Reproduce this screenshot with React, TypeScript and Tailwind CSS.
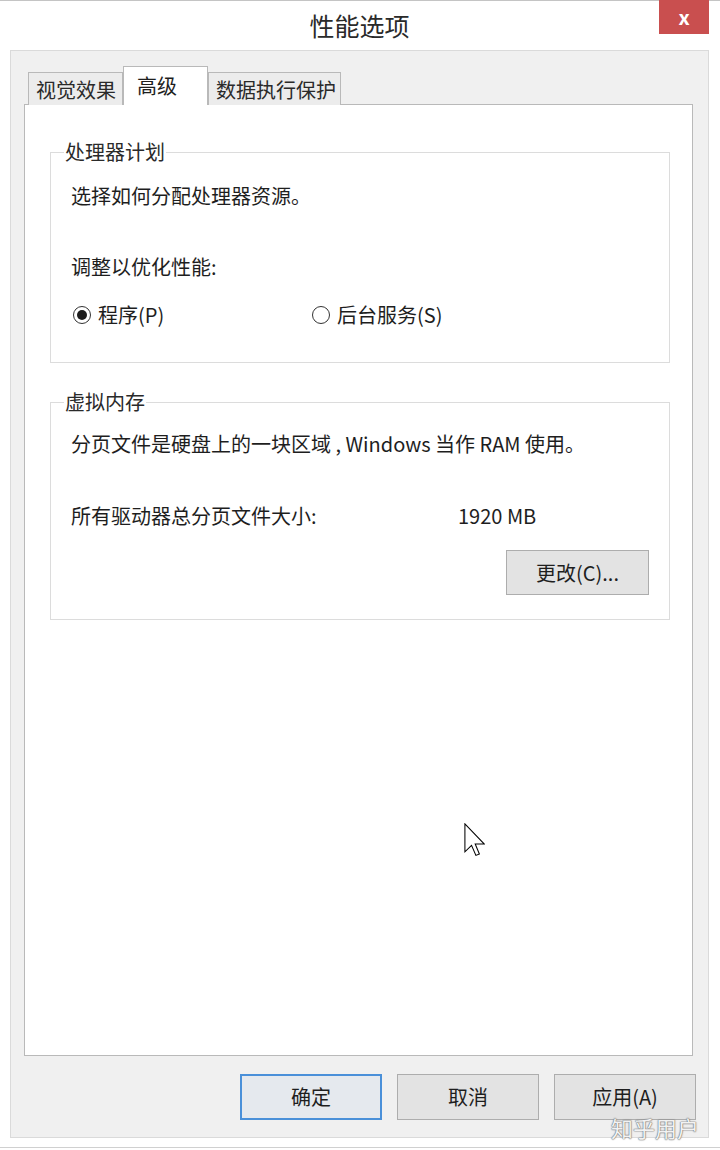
import React, {useState} from 'react';

const font = {fontFamily: '"Noto Sans CJK SC", "Noto Sans", sans-serif'};

const Radio: React.FC<{checked: boolean; label: string; onClick: () => void; className?: string}> = ({checked, label, onClick, className}) => (
    <div className={`flex items-center cursor-default ${className ?? ''}`} onClick={onClick}>
        <span className="w-[18px] h-[18px] rounded-full border border-[#333] bg-white flex items-center justify-center">
            {checked && <span className="w-[10px] h-[10px] rounded-full bg-[#1c1c1c]" />}
        </span>
        <span className="ml-[7px]">{label}</span>
    </div>
);

const App: React.FC = () => {
    const [mode, setMode] = useState<'program' | 'service'>('program');
    const tabs = [
        {label: '视觉效果', w: 'w-[95px]'},
        {label: '高级', w: 'w-[85px]'},
        {label: '数据执行保护', w: 'w-[133px]'},
    ];
    const active = 1;

    return (
        <div className="relative w-[720px] h-[1150px] bg-white text-[#1e1e1e] text-[20px] leading-[24px] overflow-hidden" style={font}>
            {/* Title bar */}
            <div className="h-[50px] border-t border-[#c4c4c4] flex items-center justify-center">
                <span className="text-[25px] text-[#2a2a2a] mt-[-2px] ml-[-1px]">性能选项</span>
            </div>
            <div className="absolute top-0 left-[659px] w-[50px] h-[34px] bg-[#c94f4f] flex items-center justify-center text-white text-[20px] font-bold">
                x
            </div>

            {/* Dialog body */}
            <div className="ml-[10px] w-[699px] h-[1088px] bg-[#f0f0f0] border border-[#dadada] pl-[13px] pr-[15px] pt-[15px] flex flex-col">
                {/* Tabs */}
                <div className="flex items-end h-[39px] ml-[4px] relative z-10">
                    {tabs.map((t, i) =>
                        i === active ? (
                            <div key={t.label} className={`${t.w} h-[39px] bg-white border border-b-0 border-[#b9b9b9] pl-[13px] pt-[7px]`}>
                                {t.label}
                            </div>
                        ) : (
                            <div key={t.label} className={`${t.w} h-[33px] bg-[#ececec] border border-b-0 border-[#b9b9b9] pl-[7px] pt-[5px] text-[#2a2a2a]`}>
                                {t.label}
                            </div>
                        )
                    )}
                </div>

                {/* Panel */}
                <div className="flex-1 bg-white border border-[#b9b9b9] mt-[-1px] pl-[25px] pr-[22px] pt-[35px]">
                    <fieldset className="border border-[#dcdcdc] px-[20px] pb-[35px]">
                        <legend className="ml-[-7px] px-[1px] text-[#2a2a2a]">处理器计划</legend>
                        <div className="mt-[20px]">选择如何分配处理器资源。</div>
                        <div className="mt-[47px]">调整以优化性能:</div>
                        <div className="mt-[24px] flex items-center">
                            <Radio className="w-[239px] ml-[2px]" checked={mode === 'program'} label="程序(P)" onClick={() => setMode('program')} />
                            <Radio checked={mode === 'service'} label="后台服务(S)" onClick={() => setMode('service')} />
                        </div>
                    </fieldset>

                    <fieldset className="mt-[27px] border border-[#dcdcdc] px-[20px] pb-[24px]">
                        <legend className="ml-[-7px] px-[1px] text-[#2a2a2a]">虚拟内存</legend>
                        <div className="mt-[18px]">分页文件是硬盘上的一块区域 , Windows 当作 RAM 使用。</div>
                        <div className="mt-[48px] flex">
                            <span className="w-[387px]">所有驱动器总分页文件大小:</span>
                            <span>1920 MB</span>
                        </div>
                        <div className="mt-[22px] flex justify-end">
                            <button className="w-[143px] h-[45px] bg-[#e3e3e3] border border-[#adadad] text-[#1e1e1e]">
                                更改(C)...
                            </button>
                        </div>
                    </fieldset>
                </div>

                {/* Bottom buttons */}
                <div className="flex justify-end gap-[15px] mt-[18px] mb-[17px] mr-[-3px]">
                    <button className="w-[142px] h-[46px] bg-[#e5e9ee] border-2 border-[#4a90d9] text-[#1e1e1e]">确定</button>
                    <button className="w-[142px] h-[46px] bg-[#e3e3e3] border border-[#adadad] text-[#1e1e1e]">取消</button>
                    <button className="w-[142px] h-[46px] bg-[#e3e3e3] border border-[#adadad] text-[#1e1e1e]">应用(A)</button>
                </div>
            </div>
            <div className="mt-[9px] border-t border-[#d0d0d0]" />

            {/* Watermark */}
            <div
                className="absolute left-[611px] top-[1113px] text-[22px] leading-[28px] text-[#f2f2f2]"
                style={{textShadow: '0 0 1px #6e6e6e, 0 0 1px #6e6e6e, 0 0 2px #9a9a9a'}}
            >
                知乎用户
            </div>

            {/* Mouse cursor */}
            <svg className="absolute left-[464px] top-[823px]" width="21" height="34" viewBox="0 0 12 19.5">
                <path d="M0.5 0.5 L0.5 16.5 L4.3 12.8 L6.8 18.6 L8.8 17.8 L6.4 12 L11.5 12 Z" fill="white" stroke="black" strokeWidth="0.6" strokeLinejoin="miter" />
            </svg>
        </div>
    );
};

export default App;
